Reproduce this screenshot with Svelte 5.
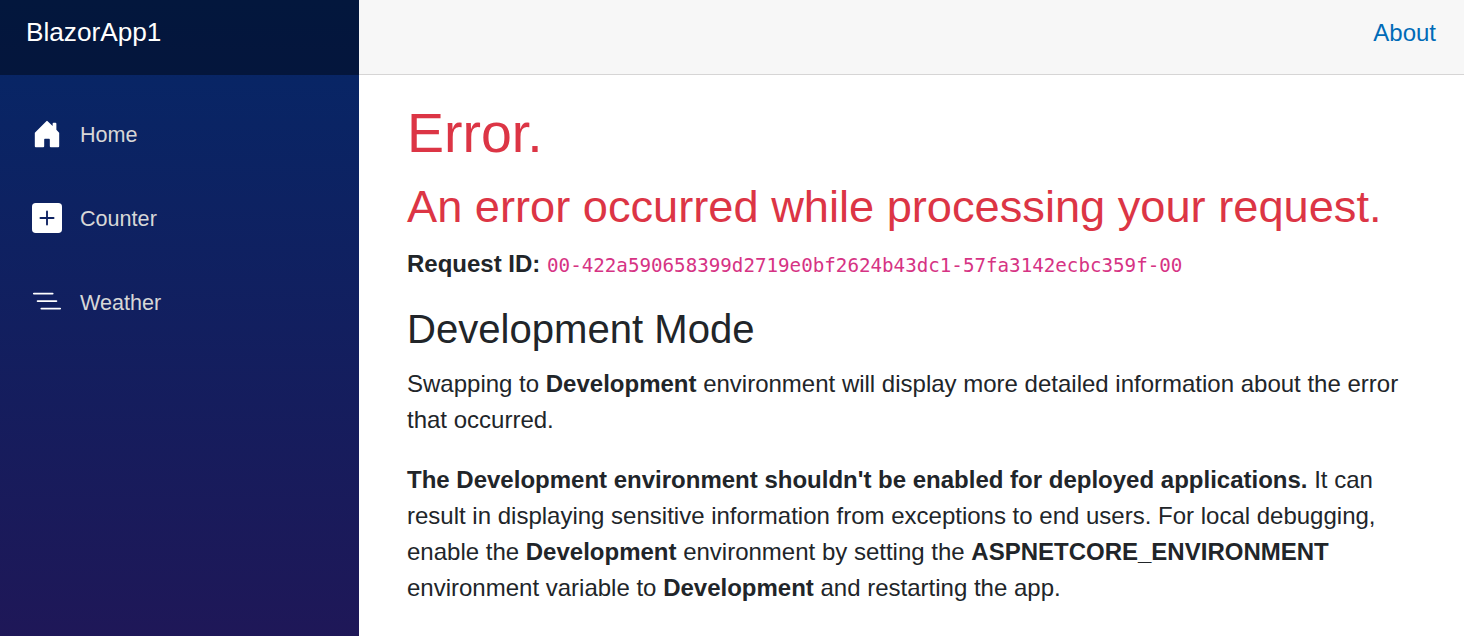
<script>
	const links = [
		{ label: 'Home', icon: 'home' },
		{ label: 'Counter', icon: 'plus' },
		{ label: 'Weather', icon: 'list' }
	];
</script>

<div class="page">
	<aside class="sidebar">
		<div class="brand">BlazorApp1</div>
		<nav class="nav">
			{#each links as link}
				<div class="nav-item">
					{#if link.icon === 'home'}
						<svg class="icon" viewBox="0 0 16 16" fill="white">
							<path d="M6.5 14.5v-3.505c0-.245.25-.495.5-.495h2c.25 0 .5.25.5.5v3.5a.5.5 0 0 0 .5.5h4a.5.5 0 0 0 .5-.5v-7a.5.5 0 0 0-.146-.354L13 5.793V2.5a.5.5 0 0 0-.5-.5h-1a.5.5 0 0 0-.5.5v1.293L8.354 1.146a.5.5 0 0 0-.708 0l-6 6A.5.5 0 0 0 1.5 7.5v7a.5.5 0 0 0 .5.5h4a.5.5 0 0 0 .5-.5Z" />
						</svg>
					{:else if link.icon === 'plus'}
						<svg class="icon" viewBox="0 0 16 16" fill="white">
							<path d="M2 0a2 2 0 0 0-2 2v12a2 2 0 0 0 2 2h12a2 2 0 0 0 2-2V2a2 2 0 0 0-2-2H2zm6.5 4.5v3h3a.5.5 0 0 1 0 1h-3v3a.5.5 0 0 1-1 0v-3h-3a.5.5 0 0 1 0-1h3v-3a.5.5 0 0 1 1 0z" />
						</svg>
					{:else}
						<svg class="icon" viewBox="0 0 16 16" fill="white">
							<path fill-rule="evenodd" d="M4.5 11.5A.5.5 0 0 1 5 11h10a.5.5 0 0 1 0 1H5a.5.5 0 0 1-.5-.5zm-2-4A.5.5 0 0 1 3 7h10a.5.5 0 0 1 0 1H3a.5.5 0 0 1-.5-.5zm-2-4A.5.5 0 0 1 1 3h10a.5.5 0 0 1 0 1H1a.5.5 0 0 1-.5-.5z" />
						</svg>
					{/if}
					<span>{link.label}</span>
				</div>
			{/each}
		</nav>
	</aside>
	<main class="main">
		<header class="topbar"><a href="#about">About</a></header>
		<article class="content">
			<h1>Error.</h1>
			<h2>An error occurred while processing your request.</h2>
			<p class="request"><strong>Request ID:</strong> <code>00-422a590658399d2719e0bf2624b43dc1-57fa3142ecbc359f-00</code></p>
			<h3>Development Mode</h3>
			<p>Swapping to <strong>Development</strong> environment will display more detailed information about the error that occurred.</p>
			<p><strong>The Development environment shouldn't be enabled for deployed applications.</strong> It can result in displaying sensitive information from exceptions to end users. For local debugging, enable the <strong>Development</strong> environment by setting the <strong>ASPNETCORE_ENVIRONMENT</strong> environment variable to <strong>Development</strong> and restarting the app.</p>
		</article>
	</main>
</div>

<style>
	:global(body) {
		margin: 0;
		overflow: hidden;
	}

	.page {
		display: flex;
		height: 636px;
		font-family: "Liberation Sans", Arial, sans-serif;
		font-size: 24px;
		line-height: 36px;
		color: #212529;
		overflow: hidden;
	}

	.sidebar {
		width: 359px;
		flex-shrink: 0;
		background-image: linear-gradient(180deg, rgb(5, 39, 103) 0%, #3a0647 209%);
	}

	.brand {
		height: 75px;
		box-sizing: border-box;
		padding: 14px 26px 0;
		font-size: 26.2px;
		line-height: 36px;
		color: #fff;
		background: rgba(0, 0, 0, 0.4);
	}

	.nav {
		padding-top: 17px;
	}

	.nav-item {
		display: flex;
		align-items: center;
		height: 84px;
		padding-left: 32px;
		font-size: 21.6px;
		color: #d7d7d7;
	}

	.nav-item span {
		padding-top: 2px;
	}

	.icon {
		width: 30px;
		height: 30px;
		margin-right: 18px;
		flex-shrink: 0;
	}

	.main {
		flex: 1;
		min-width: 0;
	}

	.topbar {
		display: flex;
		justify-content: flex-end;
		height: 59px;
		padding: 15px 28px 0 0;
		background: #f7f7f7;
		border-bottom: 1px solid #d6d5d5;
	}

	.topbar a {
		color: #006bb7;
		text-decoration: none;
	}

	.content {
		padding: 25px 48px 0;
	}

	h1,
	h2,
	h3 {
		margin: 0 0 12px;
		font-weight: 400;
		line-height: 1.2;
	}

	h1 {
		font-size: 55.5px;
		color: #dc3545;
		margin-bottom: 13px;
	}

	h2 {
		font-size: 45.2px;
		color: #dc3545;
	}

	h3 {
		font-size: 40.1px;
		margin-bottom: 13px;
	}

	p {
		margin: 0 0 24px;
	}

	.request {
		margin-bottom: 21px;
	}

	strong {
		font-weight: 700;
	}

	code {
		font-family: "DejaVu Sans Mono", monospace;
		font-size: 19.2px;
		color: #d63384;
	}
</style>
